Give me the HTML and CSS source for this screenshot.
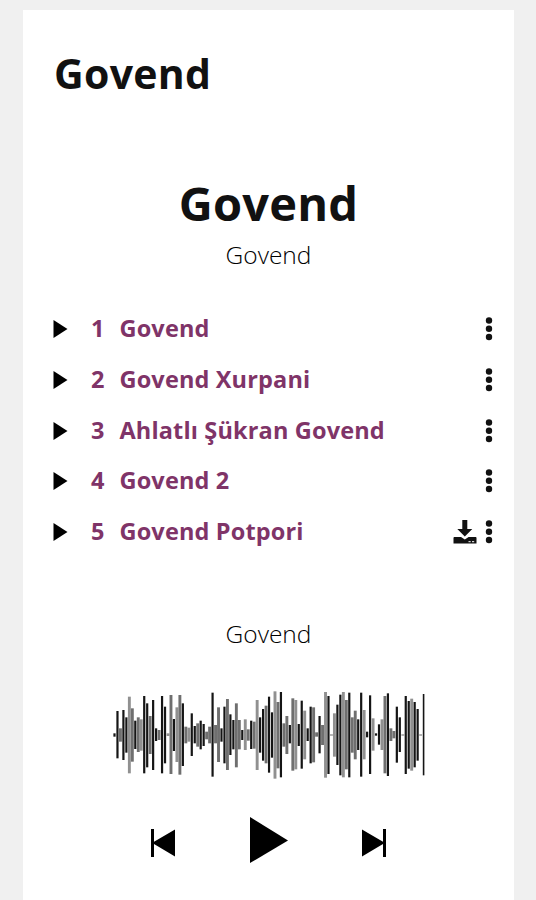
FILE: index.html
```html
<!DOCTYPE html>
<html lang="ku">
<head>
  <meta charset="UTF-8">
  <title>Govend</title>
  <meta name="viewport" content="width=device-width, initial-scale=1.0">
  <link rel="stylesheet" href="styles.css">
</head>
<body>
  <svg class="defs">
    <symbol id="play" viewBox="0 0 14 18"><path d="M0 0 L14 9 L0 18 Z"/></symbol>
    <symbol id="dots" viewBox="0 0 8 24">
      <circle cx="4" cy="3.5" r="3.2"/><circle cx="4" cy="11.8" r="3.2"/><circle cx="4" cy="20" r="3.2"/>
    </symbol>
  </svg>

  <main class="page">
    <h1 class="page-title">Govend</h1>

    <h2 class="album">Govend</h2>
    <p class="artist">Govend</p>

    <ul class="tracks">
      <li class="track"><svg class="play"><use href="#play"/></svg><span class="num">1</span><a class="name">Govend</a><svg class="dots"><use href="#dots"/></svg></li>
      <li class="track"><svg class="play"><use href="#play"/></svg><span class="num">2</span><a class="name">Govend Xurpani</a><svg class="dots"><use href="#dots"/></svg></li>
      <li class="track"><svg class="play"><use href="#play"/></svg><span class="num">3</span><a class="name">Ahlatlı Şükran Govend</a><svg class="dots"><use href="#dots"/></svg></li>
      <li class="track"><svg class="play"><use href="#play"/></svg><span class="num">4</span><a class="name">Govend 2</a><svg class="dots"><use href="#dots"/></svg></li>
      <li class="track">
        <svg class="play"><use href="#play"/></svg><span class="num">5</span><a class="name">Govend Potpori</a>
        <svg class="download" viewBox="0 0 24 24">
          <path d="M9.300 0h5v9h5L11.800 16.500 4.300 9h5z"/>
          <path d="M1 17h7l3.800 2.400 3.800-2.400h7.400l0.500 0.800v5.700H0.500v-5.700z"/>
          <path class="led" d="M15.500 21.700h2.200M19 21.700h2.200"/>
        </svg>
        <svg class="dots"><use href="#dots"/></svg>
      </li>
    </ul>

    <p class="now">Govend</p>
    <svg class="wave" id="wave" viewBox="0 0 314 88"></svg>

    <div class="controls">
      <svg class="skip" viewBox="0 0 24 28"><path d="M0 0h3v12.800L24 0.500v27L3 15v13H0z"/></svg>
      <svg class="big-play" viewBox="0 0 38 46"><path d="M0 0L38 23.500 0 46z"/></svg>
      <svg class="skip" viewBox="0 0 24 28"><path d="M24 0h-3v12.800L0 0.500v27L21 15v13h3z"/></svg>
    </div>
  </main>

  <script>
    // top, bottom, shade (d = dark, g = grey, l = light)
    const bars = `160 170 d,93 235 d,145 185 g,90 240 d,112 218 d,50 280 l,85 245 g,122 207 d,112 216 g,118 212 l,
      48 280 d,70 262 d,108 222 g,60 270 d,145 183 d,150 180 g,48 280 d,80 250 d,160 168 l,45 282 g,
      117 213 d,82 246 l,45 284 g,70 258 d,140 190 g,143 185 l,100 228 d,138 190 d,130 200 g,122 208 d,
      132 198 d,155 178 g,140 190 g,38 290 d,135 190 g,82 246 g,145 185 d,80 250 d,57 270 g,103 225 d,
      120 208 d,70 262 g,120 208 g,150 180 d,118 210 l,148 182 g,122 207 d,125 206 g,60 270 l,112 218 d,
      87 242 d,77 250 g,50 278 d,97 233 d,34 296 l,66 265 g,36 292 d,130 200 g,108 222 g,135 190 d,
      55 272 g,60 268 l,132 198 d,62 266 d,92 238 l,145 183 d,80 250 d,82 247 g,157 170 g,108 220 d,
      135 195 g,36 293 l,48 282 d,163 167 l,100 230 l,74 255 d,44 286 d,36 292 l,60 268 g,38 292 d,
      112 218 g,92 238 g,118 210 d,38 290 d,90 238 l,155 172 d,46 282 d,115 212 l,160 167 d,133 194 d,
      118 210 l,48 280 g,40 288 d,145 183 g,153 175 g,80 248 d,112 216 d,163 167 l,48 282 d,63 266 d,
      56 272 l,66 262 d,87 242 d,163 167 l,42 286 d`.split(',');
    const fill = { d: '#151515', g: '#6f6f6f', l: '#909090' };
    const wave = document.getElementById('wave');

    bars.forEach((bar, i) => {
      const [top, bottom, shade] = bar.trim().split(' ');
      const last = i === bars.length - 1;
      const w = last ? 1.6 : shade === 'd' ? 2.2 : 2.9;
      const rect = document.createElementNS('http://www.w3.org/2000/svg', 'rect');
      rect.setAttribute('x', 1.5 + i * 2.972 - w / 2);
      rect.setAttribute('y', (top - 33) / 3);
      rect.setAttribute('width', w);
      rect.setAttribute('height', (bottom - top) / 3);
      rect.setAttribute('fill', fill[shade]);
      wave.appendChild(rect);
    });
  </script>
</body>
</html>
```

FILE: styles.css
```css
* {
  box-sizing: border-box;
}
body {
  margin: 0;
  padding: 10px 22px 0 23px;
  background: #f0f0f0;
  color: #111;
  font-family: "Open Sans", "Noto Sans", sans-serif;
}
.defs {
  display: none;
}
.page {
  height: 890px;
  background: #fff;
  overflow: hidden;
}
h1, h2, p, ul {
  margin: 0;
  padding: 0;
}
.page-title {
  margin: 36px 0 0 31px;
  font-size: 41px;
  line-height: 54px;
  font-weight: 700;
  letter-spacing: 0.3px;
}
.album {
  margin-top: 71px;
  font-size: 47px;
  line-height: 64px;
  font-weight: 700;
  letter-spacing: 0.2px;
  text-align: center;
}
.artist, .now {
  color: #000;
  font-size: 24.5px;
  line-height: 34px;
  font-weight: 300;
  text-align: center;
}
.artist {
  margin-top: 3px;
}
.tracks {
  margin: 32px 21px 0 30px;
  list-style: none;
}
.track {
  display: flex;
  align-items: center;
  height: 50.7px;
  color: #7f3468;
  font-size: 23.5px;
  font-weight: 700;
  letter-spacing: 0.15px;
}
.play {
  width: 15px;
  height: 18px;
  fill: #000;
}
.num {
  width: 28.5px;
  margin-left: 23px;
}
.num, .name {
  padding-bottom: 2px;
}
.name {
  flex: 1;
}
.dots {
  width: 8px;
  height: 24px;
  fill: #111;
}
.download {
  width: 24px;
  height: 24px;
  margin-right: 8px;
  fill: #111;
}
.led {
  stroke: #fff;
  stroke-width: 1;
}
.now {
  margin-top: 60px;
}
.wave {
  display: block;
  width: 314px;
  height: 88px;
  margin: 40px 0 0 90px;
}
.controls {
  display: flex;
  align-items: center;
  justify-content: space-between;
  width: 235px;
  margin: 38px 0 0 128px;
}
.skip {
  width: 24px;
  height: 28px;
  margin-top: 5px;
}
.big-play {
  width: 38px;
  height: 46px;
}
```
